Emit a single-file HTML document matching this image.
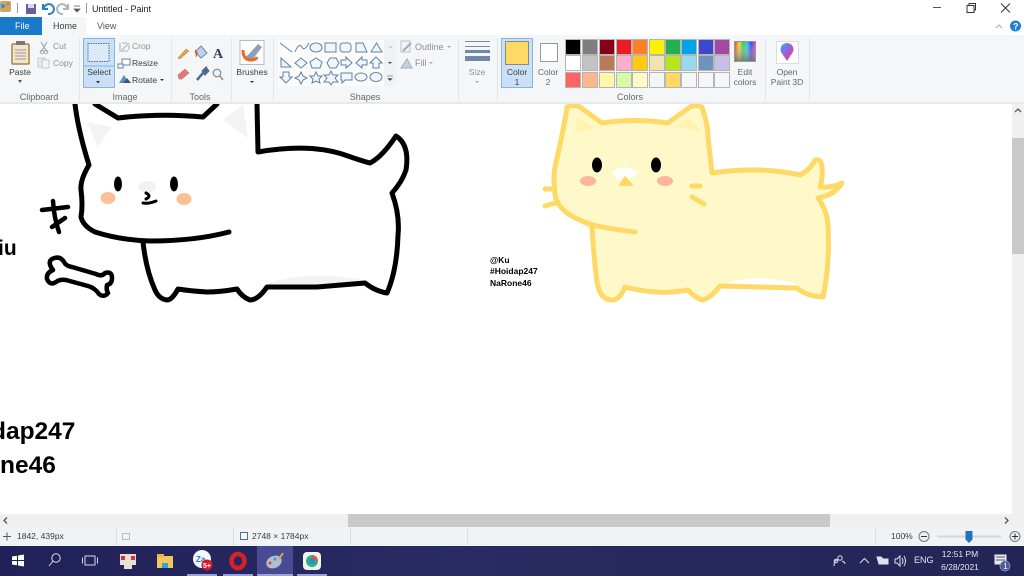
<!DOCTYPE html>
<html><head><meta charset="utf-8"><style>
html,body{margin:0;padding:0;width:1024px;height:576px;overflow:hidden;background:#fff}
body{position:relative;font-family:"Liberation Sans",sans-serif;color:#444}
svg{position:absolute;left:0;top:0}
.t{position:absolute;font-size:8.5px;line-height:10px;white-space:nowrap;color:#3c3c3c;text-align:center}
.g{color:#8f8f8f}.l{color:#666}
</style></head><body>
<svg width="1024" height="576" viewBox="0 0 1024 576" font-family="Liberation Sans, sans-serif">
<!-- canvas -->
<rect width="1024" height="576" fill="#fff"/>
<!-- black cat -->
<path d="M87 122L112 127L98 147Z" fill="#f3f3f3"/>
<path d="M223 120L243 105L248 138Z" fill="#f3f3f3"/>
<path d="M268 283Q310 270 363 280L360 284L317 285L270 285Z" fill="#f3f3f3"/>
<g fill="none" stroke="#000" stroke-width="5" stroke-linecap="round" stroke-linejoin="round">
<path d="M75 104Q78 130 89 165Q80 180 81 190Q83 205 81 217Q83 226 95 232Q120 240 150 241Q195 241 229 232"/>
<path d="M95 104L118 118Q160 113 203 117L217 104"/>
<path d="M257 104L258 152Q310 143 345 155Q362 161 370 163Q382 157 396 136Q410 145 406 170Q402 182 392 193Q400 215 398 235Q397 270 387 293Q375 291 365 283L317 287L267 287Q258 300 250 300Q242 297 237 289Q220 292 207 292Q190 291 178 289Q172 300 167 300Q159 299 155 290Q146 270 143 242"/>
<path d="M42 210L68 207M53 201Q54 218 59 232M52 227L65 218" stroke-width="4.500"/>
<path d="M53 270Q47 262 52 259Q60 255 64 262Q66 266 72 267L96 274Q102 277 105 273Q112 271 112 278Q112 284 107 285Q106 290 108 293Q104 298 99 294Q95 288 88 286L66 280Q60 279 56 282Q50 286 47 279Q46 273 53 270Z" stroke-width="4.500"/>
</g>
<ellipse cx="147" cy="187" rx="9" ry="6" fill="#f2f2f2"/>
<ellipse cx="118" cy="184" rx="4" ry="7.500" fill="#000"/><ellipse cx="174" cy="184" rx="4" ry="7.500" fill="#000"/>
<ellipse cx="108" cy="198" rx="7.500" ry="6" fill="#fdbf96"/><ellipse cx="184" cy="199" rx="7.500" ry="6" fill="#fdbf96"/>
<path d="M146 193Q152 196 146 199M143 203Q149 204 156 201" fill="none" stroke="#000" stroke-width="3" stroke-linecap="round"/>
<!-- yellow cat -->
<path d="M567 107Q574 104 580 107L602 123Q635 118 668 123L690 107Q696 104 702 107Q708 125 708 137L712 173Q760 166 800 175Q810 170 815 160Q821 158 822 167Q823 178 820 187Q832 188 842 183Q835 195 818 198Q828 212 828 227Q830 265 823 297Q806 296 797 288L720 286Q710 299 702 300Q694 297 688 290Q670 293 657 292Q640 291 625 287Q620 300 612 300Q600 300 597 282Q594 260 592 232L570 215Q555 205 555 193Q553 175 555 167Q560 145 563 130Z" fill="#fff9c9"/>
<path d="M577 117L595 128L575 135Z" fill="#fff3b0"/>
<path d="M688 117L702 132L675 127Z" fill="#fff3b0"/>
<path d="M720 285Q757 272 797 284L797 286L720 286Z" fill="#fff"/>
<path d="M820 187Q832 188 842 183Q835 195 818 198Z" fill="#fff9c9"/>
<g fill="none" stroke="#ffd966" stroke-width="5" stroke-linecap="round" stroke-linejoin="round">
<path d="M635 232Q610 229 593 225Q580 221 570 215Q555 205 555 193Q553 175 555 167Q560 145 563 130Q566 115 567 107Q574 104 580 107L602 123Q635 118 668 123L690 107Q696 104 702 107Q708 125 708 137L712 173Q760 166 800 175Q810 170 815 160Q821 158 822 167Q823 178 820 187"/>
<path d="M820 187Q832 188 842 183Q835 195 818 198Q828 212 828 227Q830 265 823 297Q806 296 797 288L720 286Q710 299 702 300Q694 297 688 290Q670 293 657 292Q640 291 625 287Q620 300 612 300Q600 300 597 282Q594 260 592 227"/>
<path d="M545 189L555 189M545 206L558 202M692 186L700 186M692 197L704 204"/>
</g>
<ellipse cx="597" cy="165" rx="5" ry="7.500" fill="#000"/><ellipse cx="656" cy="165" rx="5" ry="7.500" fill="#000"/>
<ellipse cx="588" cy="181" rx="8" ry="5" fill="#fdb59b"/><ellipse cx="665" cy="181" rx="8" ry="5" fill="#fdb59b"/>
<path d="M612 172Q623 163 639 172L630 179L618 180Z" fill="#fff"/>
<path d="M625 177L620 185H632Z" fill="#ffd966" stroke="#ffd966" stroke-width="2" stroke-linejoin="round"/>
<!-- canvas text -->
<g font-family="Liberation Sans, sans-serif" font-weight="700" fill="#000">
<text x="-2" y="255" font-size="21">iu</text>
<text x="-9" y="439" font-size="24.500">dap247</text>
<text x="0" y="473" font-size="24.500">ne46</text>
<text x="490" y="263" font-size="8.500">@Ku</text>
<text x="490" y="274" font-size="8.500">#Hoidap247</text>
<text x="490" y="286" font-size="8.500">NaRone46</text>
</g>
<!-- title bar + tabs -->
<rect width="1024" height="35" fill="#fff"/>
<rect y="35" width="1024" height="67" fill="#f5f6f7"/>
<rect y="102" width="1024" height="2" fill="#e6e8eb"/>
<rect x="0" y="17" width="42" height="18" fill="#1979ca"/>
<rect x="42" y="17" width="44" height="18" fill="#f5f6f7"/>
<rect x="0" y="1" width="11" height="11" rx="2" fill="#c8a96a"/><circle cx="3" cy="6" r="2" fill="#3b8fd1"/><circle cx="8" cy="4" r="1.500" fill="#e07a3a"/>
<rect x="17" y="3" width="1" height="10" fill="#9a9a9a"/>
<rect x="26" y="4" width="10" height="10" fill="#6a5f9e"/><rect x="28" y="4" width="6" height="4" fill="#d9d9ea"/>
<path d="M44 8A5 5 0 1 1 48 14M43 4V9H48" fill="none" stroke="#2d7fc1" stroke-width="2"/>
<path d="M67 8A5 5 0 1 0 63 14M68 4V9H63" fill="none" stroke="#a9b6c2" stroke-width="2"/>
<path d="M74 6H80M74 9H80L77 12Z" fill="#555" stroke="#555" stroke-width=".7"/>
<rect x="86" y="3" width="1" height="10" fill="#9a9a9a"/>
<path d="M933 7.500H941" stroke="#555" stroke-width="1"/>
<rect x="967" y="5.500" width="7" height="7" fill="none" stroke="#333"/><path d="M969 5.500V3.500H975.500V10H974" fill="none" stroke="#333"/>
<path d="M1001 3.500L1010 12.500M1010 3.500L1001 12.500" stroke="#333" stroke-width="1"/>
<path d="M996 28L999 25L1002 28" fill="none" stroke="#aaa"/>
<circle cx="1015.500" cy="26" r="5.500" fill="#1c7ed6"/>
<text x="1013" y="29.500" font-size="9" font-weight="700" fill="#fff">?</text>
<!-- group separators -->
<g fill="#e3e5e8">
<rect x="79" y="38" width="1" height="63"/><rect x="171" y="38" width="1" height="63"/><rect x="231" y="38" width="1" height="63"/><rect x="273" y="38" width="1" height="63"/><rect x="458" y="38" width="1" height="63"/><rect x="497" y="38" width="1" height="63"/><rect x="765" y="38" width="1" height="63"/><rect x="809" y="38" width="1" height="63"/>
</g>
<!-- Paste -->
<rect x="12" y="44" width="17" height="20" rx="1" fill="#f3e6c8" stroke="#a5804f" stroke-width="1.500"/><rect x="16" y="41" width="9" height="4" fill="#777"/>
<path d="M15 50H26M15 53H26M15 56H26M15 59H26" stroke="#9b9b9b"/>
<path d="M18 80L20 83L22 80Z" fill="#555"/>
<!-- cut copy -->
<path d="M41 42L47 52M47 42L41 52" stroke="#a9afb5" stroke-width="1.300"/><circle cx="42" cy="52" r="1.800" fill="none" stroke="#a9afb5"/><circle cx="46" cy="52" r="1.800" fill="none" stroke="#a9afb5"/>
<rect x="38" y="58" width="7" height="9" fill="#e9edf1" stroke="#b7c0c8" stroke-width=".8"/><rect x="42" y="60" width="7" height="8" fill="#f2f4f6" stroke="#b7c0c8" stroke-width=".8"/>
<!-- select -->
<rect x="83.500" y="38.500" width="31" height="49" fill="#c9e0f7" stroke="#86b5de"/>
<path d="M84 66H114" stroke="#86b5de"/>
<rect x="88" y="43.500" width="21" height="18" fill="#dce9f7" stroke="#526f9f" stroke-dasharray="1.500 1"/>
<path d="M96 81L98 83.500L100 81Z" fill="#333"/>
<!-- image icons -->
<path d="M120 43V51H128M122 50L129 43M122 43H127M129 45V50" fill="none" stroke="#aab0b6"/>
<rect x="122" y="59" width="8" height="6" fill="#fff" stroke="#5f83ad"/><rect x="118" y="64" width="5" height="4" fill="#fff" stroke="#5f83ad"/>
<path d="M119 83L124 75L129 83Z" fill="#5c90c0"/><path d="M123 83L127 78L131 83Z" fill="#3e5878"/>
<path d="M160 79L162 81L164 79Z" fill="#333"/>
<!-- tools -->
<path d="M178 58L186 49L189 51L180 59Z" fill="#e0a73c" stroke="#a1793b" stroke-width=".5"/>
<path d="M195 52L201 46L207 53L201 58Z" fill="#bcd4ea" stroke="#6d8aa8"/><path d="M195 49L198 53L196 58Z" fill="#e2572f"/>
<text x="213" y="58" font-family="Liberation Serif, serif" font-weight="700" font-size="14" fill="#2e3e5c">A</text>
<path d="M178 75L185 69L189 73L182 79L179 79Z" fill="#e2797a" stroke="#b85a5a" stroke-width=".5"/>
<path d="M197 80L203 73M203 71L206 68L208 71L205 74Z" stroke="#4c6f93" stroke-width="2.500" fill="#2c5680"/>
<circle cx="217" cy="73" r="3.800" fill="#eaf2f8" stroke="#7f8c99" stroke-width="1.200"/><path d="M220 76L223 80" stroke="#8c8c8c" stroke-width="1.500"/>
<!-- brushes -->
<rect x="240" y="40.500" width="24" height="24" fill="#fff" stroke="#bbb"/>
<path d="M243 56Q247 62 253 59L262 47L258 44L249 54Q245 58 243 56Z" fill="#8ba0bf"/>
<path d="M243 50Q243 60 251 60Q256 60 257 57" fill="none" stroke="#e86a25" stroke-width="3"/>
<path d="M250 81L252 83L254 81Z" fill="#333"/>
<!-- shapes gallery -->
<rect x="278" y="40" width="106" height="46" fill="#fbfbfc"/><rect x="384" y="40" width="12" height="46" fill="#f0f1f3"/>
<g fill="#f0f6fb" stroke="#5f83a5" stroke-width="1">
<path d="M280 43L292 52" fill="none"/><path d="M295 52Q299 42 302 47Q304 52 309 43" fill="none"/>
<ellipse cx="316" cy="47.500" rx="6" ry="4.500"/><rect x="325" y="43" width="11" height="9"/><rect x="340" y="43" width="11" height="9" rx="3"/><path d="M356 52V43H363L367 52Z"/><path d="M371 52L376.500 43L382 52Z"/>
<path d="M281 67V58L291 67Z"/><path d="M301 58L307 63L301 68L295 63Z"/><path d="M316 58L322 62L320 68H312L310 62Z"/><path d="M327 63L330 58H336L339 63L336 68H330Z"/><path d="M341 60H346V57L352 63L346 68V65H341Z"/><path d="M367 60H362V57L356 63L362 68V65H367Z"/><path d="M376 57L382 63H379V68H373V63H370Z"/>
<path d="M286 83L292 77H289V72H283V77H280Z"/><path d="M301 72L303 76L307 78L303 80L301 84L299 80L295 78L299 76Z"/><path d="M316 72L318 76L322 76L319 79L320 83L316 81L312 83L313 79L310 76L314 76Z"/><path d="M331 71L333 75H338L335 78L338 82H333L331 85L329 82H324L327 78L324 75H329Z"/><path d="M341 73H352V80H345L342 83V80H341Z"/><ellipse cx="361" cy="77" rx="6" ry="4"/><ellipse cx="376" cy="77" rx="6" ry="4.500"/>
</g>
<path d="M389 47H392" stroke="#bbb"/><path d="M388 62L390 64L392 62Z" fill="#444"/><path d="M387 76H393M388 78.500L390 80.500L392 78.500Z" fill="#444" stroke="#444" stroke-width=".6"/>
<!-- outline fill -->
<path d="M401 41H410V52H401Z" fill="#f2f4f6" stroke="#b8c0c8"/><path d="M403 51L411 43" stroke="#9cadbd" stroke-width="2"/>
<path d="M401 68L407 59L412 68Z" fill="#c3d3e1" stroke="#9cadbd"/>
<path d="M447 46L449 48L451 46Z" fill="#aaa"/><path d="M429 62L431 64L433 62Z" fill="#aaa"/>
<!-- size -->
<path d="M465 41.500H490" stroke="#7a8aa8"/><path d="M465 46.500H490" stroke="#7a8aa8" stroke-width="1"/><path d="M465 51.500H490" stroke="#7086aa" stroke-width="3"/><path d="M465 58.500H490" stroke="#7086aa" stroke-width="5"/>
<path d="M475 81L477 83L479 81Z" fill="#aaa"/>
<!-- color 1/2 -->
<rect x="501.500" y="38.500" width="31" height="49" fill="#c9e0f7" stroke="#86b5de"/>
<rect x="505.500" y="41.500" width="23" height="23" fill="#ffd966" stroke="#888"/>
<rect x="540.500" y="43.500" width="17" height="18" fill="#fff" stroke="#999"/>
<!-- palette -->
<g stroke="#b5b5b5" stroke-width="1">
<rect x="565.500" y="39.500" width="15" height="15" fill="#000"/><rect x="582.500" y="39.500" width="15" height="15" fill="#7f7f7f"/><rect x="599.500" y="39.500" width="15" height="15" fill="#880015"/><rect x="616.500" y="39.500" width="15" height="15" fill="#ed1c24"/><rect x="632.500" y="39.500" width="15" height="15" fill="#ff7f27"/><rect x="649.500" y="39.500" width="15" height="15" fill="#fff200"/><rect x="665.500" y="39.500" width="15" height="15" fill="#22b14c"/><rect x="681.500" y="39.500" width="15" height="15" fill="#00a2e8"/><rect x="698.500" y="39.500" width="15" height="15" fill="#3f48cc"/><rect x="714.500" y="39.500" width="15" height="15" fill="#a349a4"/>
<rect x="565.500" y="55.500" width="15" height="15" fill="#fff"/><rect x="582.500" y="55.500" width="15" height="15" fill="#c3c3c3"/><rect x="599.500" y="55.500" width="15" height="15" fill="#b97a57"/><rect x="616.500" y="55.500" width="15" height="15" fill="#ffaec9"/><rect x="632.500" y="55.500" width="15" height="15" fill="#ffc90e"/><rect x="649.500" y="55.500" width="15" height="15" fill="#efe4b0"/><rect x="665.500" y="55.500" width="15" height="15" fill="#b5e61d"/><rect x="681.500" y="55.500" width="15" height="15" fill="#99d9ea"/><rect x="698.500" y="55.500" width="15" height="15" fill="#7092be"/><rect x="714.500" y="55.500" width="15" height="15" fill="#c8bfe7"/>
<rect x="565.500" y="72.500" width="15" height="15" fill="#ff6464"/><rect x="582.500" y="72.500" width="15" height="15" fill="#ffb68c"/><rect x="599.500" y="72.500" width="15" height="15" fill="#fff7ab"/><rect x="616.500" y="72.500" width="15" height="15" fill="#d9fba6"/><rect x="632.500" y="72.500" width="15" height="15" fill="#fffac8"/><rect x="649.500" y="72.500" width="15" height="15" fill="#f4f4f6"/><rect x="665.500" y="72.500" width="15" height="15" fill="#ffd966"/><rect x="681.500" y="72.500" width="15" height="15" fill="#f5f6f7"/><rect x="698.500" y="72.500" width="15" height="15" fill="#f5f6f7"/><rect x="714.500" y="72.500" width="15" height="15" fill="#f5f6f7"/>
</g>
<!-- edit colors -->
<defs><linearGradient id="rb" x1="0" x2="1"><stop offset="0" stop-color="#e8261c"/><stop offset=".2" stop-color="#e8d81c"/><stop offset=".4" stop-color="#22c43c"/><stop offset=".6" stop-color="#1cc4e0"/><stop offset=".8" stop-color="#2a2ae0"/><stop offset="1" stop-color="#e020c0"/></linearGradient><linearGradient id="gr" x1="0" x2="0" y1="0" y2="1"><stop offset="0" stop-color="#fff" stop-opacity=".1"/><stop offset="1" stop-color="#777" stop-opacity=".85"/></linearGradient><linearGradient id="p3" x1="0" x2="1" y1="0" y2="1"><stop offset="0" stop-color="#27b4ee"/><stop offset=".5" stop-color="#a25ae0"/><stop offset="1" stop-color="#f2553c"/></linearGradient></defs>
<rect x="735" y="42" width="20" height="19" fill="url(#rb)"/><rect x="735" y="42" width="20" height="19" fill="url(#gr)"/><rect x="734.500" y="41.500" width="21" height="20" fill="none" stroke="#999"/>
<!-- paint3d -->
<rect x="776.500" y="41.500" width="22" height="22" fill="#fff" stroke="#ddd"/>
<path d="M787 61L781 52A6.500 6.500 0 1 1 793 52Z" fill="url(#p3)"/>
<!-- scrollbars -->
<rect x="1012" y="104" width="12" height="410" fill="#f0f0f0"/><rect x="1012" y="138" width="12" height="116" fill="#c9c9c9"/>
<path d="M1015 112L1018 109L1021 112" fill="none" stroke="#555" stroke-width="1.300"/>
<rect x="0" y="514" width="1024" height="13" fill="#f0f0f0"/><rect x="348" y="514" width="482" height="13" fill="#c9c9c9"/>
<path d="M7 517.500L4 520.500L7 523.500M1005 517.500L1008 520.500L1005 523.500" fill="none" stroke="#555" stroke-width="1.300"/>
<!-- status -->
<rect y="527" width="1024" height="19" fill="#f1f2f4"/>
<g fill="#dcdde0"><rect x="116" y="528" width="1" height="17"/><rect x="233" y="528" width="1" height="17"/><rect x="350" y="528" width="1" height="17"/><rect x="467" y="528" width="1" height="17"/><rect x="875" y="528" width="1" height="17"/></g>
<path d="M3 536.500H11M7 532.500V540.500" stroke="#4a5a6a"/>
<rect x="122.500" y="533.500" width="7" height="6" fill="none" stroke="#7c8a99" stroke-dasharray="1 1"/>
<rect x="240.500" y="532.500" width="7" height="7" fill="#f6f8fa" stroke="#4c7396"/>
<circle cx="924" cy="536.500" r="5" fill="#eee" stroke="#777"/><path d="M921 536.500H927" stroke="#333"/>
<path d="M937 536.500H1001" stroke="#d6d6d6" stroke-width="2"/>
<path d="M965.500 531H972.500V539.500L969 543L965.500 539.500Z" fill="#1d72c4"/>
<circle cx="1015" cy="536.500" r="5" fill="#eee" stroke="#777"/><path d="M1012 536.500H1018M1015 533.500V539.500" stroke="#333"/>
<!-- taskbar -->
<defs><linearGradient id="tb" x1="0" x2="1"><stop offset="0" stop-color="#1f2158"/><stop offset=".45" stop-color="#292b62"/><stop offset="1" stop-color="#232556"/></linearGradient></defs>
<rect y="546" width="1024" height="30" fill="url(#tb)"/>
<rect x="257" y="546" width="36" height="30" fill="#484b92"/>
<g fill="#9c9fe0"><rect x="187" y="574" width="30" height="2"/><rect x="223" y="574" width="30" height="2"/><rect x="257" y="574" width="36" height="2"/><rect x="297" y="574" width="30" height="2"/></g>
<path d="M12 556.500L17 555.700V560H12ZM18 555.500L24 554.500V560H18ZM12 561H17V565.300L12 564.500ZM18 561H24V566.500L18 565.500Z" fill="#fff"/>
<circle cx="56" cy="558" r="4.200" fill="none" stroke="#d9dbe6"/><path d="M53 561L49 566" stroke="#d9dbe6"/>
<rect x="85" y="556" width="10" height="9" fill="none" stroke="#d9dbe6"/><path d="M82.500 557.500V563.500M97.500 557.500V563.500" stroke="#d9dbe6"/>
<rect x="120" y="554" width="16" height="11" fill="#e8e1d5"/><rect x="124" y="564" width="8" height="5" fill="#e8e1d5"/><rect x="121" y="556" width="4" height="4" fill="#c43a3a"/><rect x="131" y="556" width="4" height="4" fill="#c43a3a"/>
<rect x="157" y="556" width="16" height="12" fill="#f2c75c"/><rect x="157" y="554" width="7" height="3" fill="#e2b548"/><rect x="162" y="563" width="6" height="5" fill="#35a3d8"/>
<circle cx="202" cy="559" r="9" fill="#f4f6fa"/><text x="196" y="562" font-size="8" font-weight="700" fill="#2676d0">Za</text><circle cx="207" cy="565" r="5.500" fill="#d5172a"/><text x="203" y="568" font-size="7" font-weight="700" fill="#fff">5+</text>
<ellipse cx="238" cy="561" rx="6.500" ry="7" fill="none" stroke="#d6202a" stroke-width="4.500"/>
<ellipse cx="274" cy="562" rx="8" ry="6" fill="#b4bdc9" transform="rotate(-25 274 562)"/><circle cx="270" cy="563" r="1.500" fill="#d34a3a"/><circle cx="275" cy="559" r="1.500" fill="#3a9bd3"/><path d="M279 559L283 553" stroke="#d4a45a" stroke-width="2"/>
<rect x="303" y="552" width="18" height="18" rx="4" fill="#f1f3f2"/><circle cx="312" cy="561" r="6" fill="#2bb673"/><path d="M312 555A6 6 0 0 1 318 561H312Z" fill="#e9533d"/><circle cx="312" cy="561" r="3" fill="#2d8ad6"/>
<!-- tray -->
<g fill="none" stroke="#dfe1ea">
<circle cx="840" cy="558" r="2.200"/><path d="M834 566Q834 560 838 560M842 561Q845 562 845 564"/><circle cx="836" cy="561" r="1.800"/>
<path d="M860 563L864.500 558.500L869 563"/>
<path d="M877 557H881L883 559H888V564H879Z" fill="#dfe1ea"/>
<path d="M895 559H897L900 556V566L897 563H895Z"/><path d="M902 558Q904 561 902 564M904 556Q907 561 904 566"/>
</g>
<rect x="994.500" y="554.500" width="12" height="10" fill="#e8eaf0"/><path d="M996 557H1005M996 560H1005" stroke="#555"/>
<circle cx="1005" cy="566" r="5" fill="#4a5a9e" stroke="#9aa2c8" stroke-width=".7"/>
<text x="1003.300" y="569" font-size="8" fill="#fff">1</text>
</svg>

<div class="t" style="left:15px;top:19px;width:14px;font-size:9px;color:#fff;line-height:14px;font-weight:400">File</div>
<div class="t" style="left:53px;top:19px;font-size:9px;line-height:14px">Home</div>
<div class="t" style="left:97px;top:19px;font-size:9px;line-height:14px;color:#555">View</div>
<div class="t" style="left:92px;top:3px;font-size:9px;line-height:12px;color:#222">Untitled - Paint</div>

<div class="t" style="left:8px;top:67px;width:24px">Paste</div>
<div class="t g" style="left:53px;top:41px">Cut</div>
<div class="t g" style="left:53px;top:58px">Copy</div>
<div class="t" style="left:84px;top:67px;width:30px">Select</div>
<div class="t g" style="left:132px;top:41px">Crop</div>
<div class="t" style="left:132px;top:58px">Resize</div>
<div class="t" style="left:132px;top:75px">Rotate</div>
<div class="t" style="left:236px;top:67px;width:32px">Brushes</div>
<div class="t g" style="left:415px;top:42px;font-size:9px">Outline</div>
<div class="t g" style="left:415px;top:58px;font-size:9px">Fill</div>
<div class="t g" style="left:468px;top:67px;width:18px">Size</div>
<div class="t" style="left:502px;top:67px;width:30px">Color<br>1</div>
<div class="t l" style="left:534px;top:67px;width:28px">Color<br>2</div>
<div class="t l" style="left:733px;top:67px;width:24px">Edit<br>colors</div>
<div class="t l" style="left:768px;top:67px;width:38px">Open<br>Paint 3D</div>
<div class="t l" style="left:14px;top:92px;width:50px;font-size:9px">Clipboard</div>
<div class="t l" style="left:105px;top:92px;width:40px;font-size:9px">Image</div>
<div class="t l" style="left:180px;top:92px;width:40px;font-size:9px">Tools</div>
<div class="t l" style="left:345px;top:92px;width:40px;font-size:9px">Shapes</div>
<div class="t l" style="left:610px;top:92px;width:40px;font-size:9px">Colors</div>
<div class="t" style="left:17px;top:531px">1842, 439px</div>
<div class="t" style="left:252px;top:531px">2748 × 1784px</div>
<div class="t" style="left:891px;top:531px">100%</div>
<div class="t" style="left:914px;top:555px;color:#e4e6ee;font-size:9px">ENG</div>
<div class="t" style="left:938px;top:548px;width:44px;color:#e4e6ee;line-height:13px;font-size:8.500px">12:51 PM<br>6/28/2021</div>
</body></html>
